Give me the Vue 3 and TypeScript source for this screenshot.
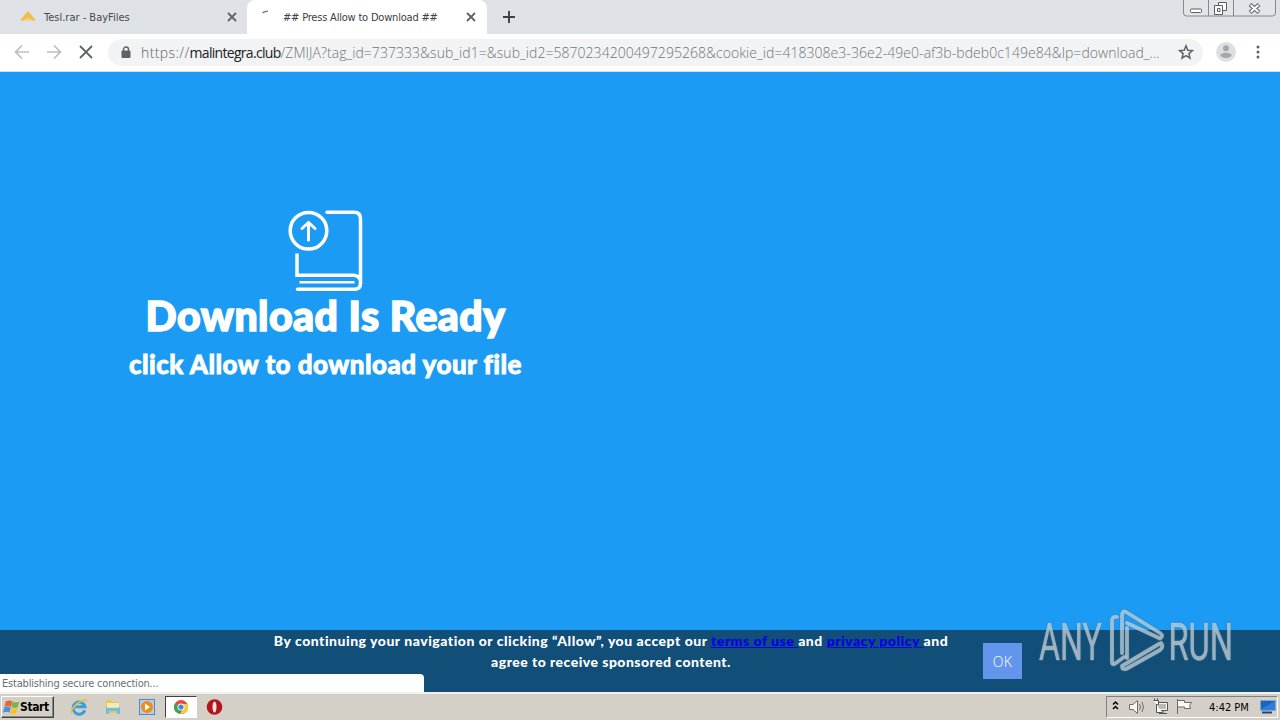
<script setup lang="ts">
interface Tab { title: string; active: boolean }
const tabs: Tab[] = [
  { title: 'Tesl.rar - BayFiles', active: false },
  { title: '## Press Allow to Download ##', active: true },
]
const path = '/ZMIJA?tag_id=737333&sub_id1=&sub_id2=5870234200497295268&cookie_id=418308e3-36e2-49e0-af3b-bdeb0c149e84&lp=download_...'
</script>

<template>
  <div class="screen">
    <header class="tabs">
      <div v-for="tab in tabs" :key="tab.title" class="tab" :class="{ active: tab.active }">
        <svg v-if="!tab.active" class="fav" viewBox="0 0 16 16"><path d="M0 11.5 8 2l8 9.5-3.3.3L8 8.6l-4.700 3.200z" fill="#f0bd45" /><path d="m3.500 11.500 4.500-3 4.500 3z" fill="#f6cf6c" /></svg>
        <svg v-else class="fav" viewBox="0 0 16 16"><path d="M5.500 4Q7.500 2 11 2.200" fill="none" stroke="#858585" stroke-width="1.600" /></svg>
        <span class="title">{{ tab.title }}</span>
        <svg class="close" viewBox="0 0 10 10"><path d="m1 1 8 8M9 1 1 9" stroke="#5f6368" stroke-width="1.800" /></svg>
      </div>
      <svg class="plus" viewBox="0 0 12 12"><path d="M6 0v12M0 6h12" stroke="#3c4043" stroke-width="1.900" /></svg>
      <svg class="window" viewBox="0 0 94 18">
        <path d="M.5 0v13q0 3 3 3h86q3 0 3-3V0M25.500 0v16M50.500 0v16" fill="#e2e4e8" stroke="#85888e" />
        <rect x="7.500" y="9" width="11" height="3.500" rx="1" fill="#fff" stroke="#5b5e66" />
        <path d="M35.500 2.500h8v8h-8z" fill="#fff" stroke="#5b5e66" />
        <path d="M31.500 5.500h8v9h-8zM34.500 8.500h2.500v3h-2.500z" fill="#fff" stroke="#5b5e66" />
        <path d="m67 4.500 9 8M76 4.500l-9 8" stroke="#5b5e66" stroke-width="4" /><path d="m67.500 5 8 7M75.500 5l-8 7" stroke="#fff" stroke-width="2" />
      </svg>
    </header>

    <div class="toolbar">
      <svg class="nav" viewBox="0 0 96 24">
        <g fill="none" stroke-width="1.700">
          <path d="M21 12H8M14 5.500 7.500 12l6.500 6.500M39 12h13M46 5.500l6.500 6.500-6.500 6.500" stroke="#bcbec1" />
          <path d="m72 6 12 12M84 6 72 18" stroke="#5f6368" stroke-width="1.800" />
        </g>
      </svg>
      <div class="address">
        <svg class="lock" viewBox="0 0 10 13"><path d="M2.500 5V3.500a2.500 2.500 0 0 1 5 0V5" fill="none" stroke="#5f6368" stroke-width="1.400" /><rect x=".5" y="4.500" width="9" height="7.500" rx="1" fill="#5f6368" /></svg>
        <div class="url"><span class="scheme">https://</span><span class="host">malintegra.club</span><span class="path">{{ path }}</span></div>
        <svg class="star" viewBox="0 0 16 16"><path d="m8 1.800 1.800 4.400 4.700.4-3.600 3 1.100 4.600L8 11.700l-4 2.500 1.100-4.600-3.600-3 4.700-.4z" fill="none" stroke="#5f6368" stroke-width="1.500" /></svg>
      </div>
      <svg class="avatar" viewBox="0 0 20 20"><circle cx="10" cy="10" r="10" fill="#dedfe1" /><circle cx="10" cy="6.200" r="3" fill="#a5a7aa" /><path d="M4.300 13.600c0-3.800 11.400-3.800 11.400 0-1.300 3.100-10.100 3.100-11.400 0z" fill="#a5a7aa" /></svg>
      <svg class="dots" viewBox="0 0 4 14"><g fill="#5f6368"><circle cx="2" cy="2" r="1.500" /><circle cx="2" cy="7" r="1.500" /><circle cx="2" cy="12" r="1.500" /></g></svg>
    </div>

    <main>
      <section class="hero">
        <svg class="book" viewBox="0 0 78 84">
          <g fill="none" stroke="#fff" stroke-width="3.500" stroke-linecap="round">
            <circle cx="21.500" cy="22.700" r="18.300" />
            <path d="M21.500 32V15M15 20.500 21.500 14.500l6.500 6" stroke-width="3" />
            <path d="M40 4.200h27q6.500 0 6.500 6.500v64.500q0 6-6 6H10.500" />
            <path d="M10 45.500V67.200H66.500q5 0 7 5" stroke-linecap="butt" />
            <path d="M12.500 74.200h55" stroke-width="2.600" stroke-linecap="butt" />
          </g>
        </svg>
        <h1>Download Is Ready</h1>
        <h2>click Allow to download your file</h2>
      </section>
      <footer class="consent">
        <p><span class="line one">By continuing your navigation or clicking “Allow”, you accept our <a>terms of use </a>and <a>privacy policy </a>and</span><span class="line two">agree to receive sponsored content.</span></p>
        <button>OK</button>
      </footer>
      <div class="status">Establishing secure connection...</div>
      <svg class="watermark" viewBox="0 0 230 66">
        <g fill="#dce9f0" fill-opacity=".6" stroke="#dce9f0" stroke-opacity=".3" stroke-width=".7" font-family="Roboto, sans-serif" font-weight="400" font-size="51">
          <text transform="translate(4 51) scale(.63 1)">ANY</text>
          <text transform="translate(133.500 51) scale(.64 1)">RUN</text>
        </g>
        <g fill="none" stroke="#dce9f0" stroke-opacity=".6" stroke-width="3.800" stroke-linejoin="round" stroke-linecap="round">
          <path d="M82 8q-5-1-5 4v41q0 4 4 1l8-6" />
          <path d="M87 44V7q0-6 4-4l34 21q4 3 0 5.500L92 14M92 19v30M126 34q3 4-1 7L91 60q-4 1-4-3L124 35" />
        </g>
      </svg>
    </main>

    <nav class="taskbar">
      <div class="start">
        <svg viewBox="0 0 18 16"><path d="M3 2q4-2 7 0L8.500 8q-3-2-7 0z" fill="#e8653a" /><path d="M10.500 2.200q3 2 7 0L15.500 8q-3 2-6.500 0z" fill="#75b843" /><path d="M1.300 8.500q3-2 7 0L6.800 14q-3-2-6.800 0z" fill="#4a91d9" /><path d="M9 8.800q3 2 6.500 0l-1.500 6q-3 2-6.500 0z" fill="#f5c22e" /></svg>
        <b>Start</b>
      </div>
      <div class="apps">
        <div class="app"><svg viewBox="0 0 18 18"><path d="M14.800 12.200A6 6 0 1 1 15 8.800H5" fill="none" stroke="#38a0dd" stroke-width="3" /><path d="M2 15.500C-1 14 5 6 12 2.500q5-2 4.500 1.500" fill="none" stroke="#efbe3f" stroke-width="1.500" /></svg></div>
        <div class="app"><svg viewBox="0 0 18 18"><path d="M2 2h5l1 2h7v11H2z" fill="#e9c65c" /><path d="M3 5h12v6H3z" fill="#faeba3" /><path d="M2 9h14v7h-3v-3H5v3H2z" fill="#76bddd" /><path d="M3 9.500h12" stroke="#c5e9f5" /></svg></div>
        <div class="app"><svg viewBox="0 0 18 18"><rect x="1.500" y="1.500" width="15" height="15" fill="#afd0ed" stroke="#4b8bca" /><circle cx="9" cy="9" r="6" fill="#f18a19" /><path d="m7 5.500 5 3.500-5 3.500z" fill="#fff" /></svg></div>
        <div class="app current"><svg viewBox="0 0 18 18"><circle cx="9" cy="9" r="7" fill="#e24a3b" /><path d="M9 9 3 5.400A7 7 0 0 0 8 15.900z" fill="#34a853" /><path d="M9 6h6.300A7 7 0 0 1 8 15.900L12 9z" fill="#f9ce33" /><circle cx="9" cy="9" r="3.500" fill="#fff" /><circle cx="9" cy="9" r="2.600" fill="#4285dd" /></svg></div>
        <div class="app"><svg viewBox="0 0 18 18"><circle cx="8.500" cy="9" r="7.800" fill="#b7131b" /><ellipse cx="8.500" cy="9" rx="2" ry="5.500" fill="#f3e4e1" /></svg></div>
      </div>
      <div class="tray">
        <svg class="trayicons" viewBox="0 0 86 20">
          <path d="m3 7.500 2.500-2.500 2.500 2.500M3 12 5.500 9.500 8 12" fill="none" stroke="#000" stroke-width="1.500" />
          <g fill="#f7f7f4" stroke="#6d6d6a"><path d="M19.500 7.500H23l4.500-4v13l-4.500-4h-3.500z" /><path d="M29.500 7q2 3 0 6M32 5q3 5 0 10" fill="none" /></g>
          <g fill="#f8f8f5" stroke="#555"><path d="M46.500 5.500h11v8h-11zM49 16.500h8M53 14v2" /><path d="M48 7h8v5h-8z" fill="#b9b9b5" stroke="none" /><path d="M43.500 3.500h5v4h-2v8h6M44.500 3V1.500M47.500 3V1.500" /></g>
          <path d="M67.500 2v15M67.500 3.500h7v2h7l-2 3 1 3h-6v-1.500h-7" fill="#fafafa" stroke="#6b6b68" />
        </svg>
        <span class="clock">4:42 PM</span>
        <svg class="desktop" viewBox="0 0 16 14"><path d="M.5.500h15v10H.5z" fill="#1d62bc" stroke="#7aa6d8" /><path d="M1 9 15 1v9H1z" fill="#2e7dd6" /><path d="M2 12.500h10" stroke="#27456e" stroke-width="2" /></svg>
      </div>
    </nav>
  </div>
</template>

<style>
body { margin: 0; }
</style>

<style scoped>
.screen { width: 1280px; height: 720px; display: flex; flex-direction: column; overflow: hidden; font-family: "DejaVu Sans Condensed", "DejaVu Sans", sans-serif; font-size: 11px; }
svg { display: block; flex: none; }
.tabs { height: 34px; background: #dee1e6; display: flex; align-items: flex-start; box-sizing: border-box; flex: none; }
.tab { height: 34px; display: flex; align-items: center; box-sizing: border-box; width: 247px; padding: 0 10px 0 20px; color: #45494d; }
.tab.active { width: 240px; background: #fff; border-radius: 8px 8px 0 0; padding: 0 11px 0 10px; color: #3c4043; }
.fav { width: 16px; height: 16px; }
.title { flex: 1; margin-left: 8px; white-space: nowrap; letter-spacing: 0; }
.active .title { margin-left: 10px; letter-spacing: -.2px; }
.active .fav { align-self: flex-start; margin-top: 9px; }
.close { width: 10px; height: 10px; }
.plus { width: 12px; height: 12px; margin: 11px 0 0 16px; }
.window { width: 94px; height: 18px; margin-left: auto; margin-right: 3px; }
.toolbar { height: 38px; background: #fff; border-bottom: 1px solid #d8dcdf; box-sizing: border-box; display: flex; align-items: center; flex: none; padding-bottom: 1px; }
.nav { width: 96px; height: 24px; margin-left: 8px; }
.address { margin-left: 4px; width: 1095px; height: 27px; box-sizing: border-box; border-radius: 14px; background: #f1f3f4; display: flex; align-items: center; padding: 0 9px 0 13px; }
.lock { width: 10px; height: 13px; }
.url { font: 300 14px/19px "Open Sans", sans-serif; margin-left: 10px; flex: 1; white-space: nowrap; color: #70757a; }
.scheme { color: #5f6368; letter-spacing: .4px; }
.host { color: #202124; font-weight: 400; letter-spacing: -.7px; }
.path { letter-spacing: .04px; }
.star { width: 16px; height: 16px; }
.avatar { width: 20px; height: 20px; margin-left: 13px; }
.dots { width: 4px; height: 14px; margin-left: 20px; }
main { height: 620px; flex: none; background: #1c9bf4; position: relative; display: flex; flex-direction: column; justify-content: space-between; }
.hero { width: 651px; padding-top: 136px; display: flex; flex-direction: column; align-items: center; color: #fff; }
.book { width: 78px; height: 84px; }
h1, h2 { margin: 0; font-family: Lato, sans-serif; font-weight: 900; white-space: nowrap; paint-order: stroke; stroke-linejoin: round; font-variant-ligatures: none; }
h1 { font-size: 41px; line-height: 48px; letter-spacing: .45px; -webkit-text-stroke: 1.500px #fff; }
h2 { font-size: 26px; line-height: 32px; margin-top: 8px; letter-spacing: .46px; -webkit-text-stroke: .8px #fff; }
.consent { height: 62px; background: #114e78; display: flex; box-sizing: border-box; padding-left: 262px; }
p { margin: 0; width: 698px; color: #fff; font: 900 14px/21px Lato, sans-serif; text-align: center; font-variant-ligatures: none; }
.line { display: block; white-space: nowrap; letter-spacing: .47px; }
.one { letter-spacing: .52px; }
a { color: #0000ee; text-decoration: underline; }
button { width: 39px; height: 36px; margin: 13px 0 0 23px; padding: 0; border: 0; background: #6495ed; color: #fff; font: 300 14px "Open Sans", sans-serif; letter-spacing: .3px; }
.status { position: absolute; left: 0; bottom: 0; width: 424px; height: 18px; box-sizing: border-box; padding-left: 2px; background: #fff; border-radius: 0 4px 0 0; line-height: 20px; letter-spacing: -.2px; color: #6a6e72; }
.watermark { position: absolute; left: 1035px; top: 537px; width: 230px; height: 66px; filter: drop-shadow(0 0 1px #536f80); }
.taskbar { height: 28px; background: #d4d0c8; border-top: 2px solid #f3f1ed; box-sizing: border-box; display: flex; align-items: center; flex: none; }
.start { width: 53px; height: 22px; margin-left: 1px; box-sizing: border-box; display: flex; align-items: center; border: 1px solid; border-color: #fff #404040 #404040 #fff; box-shadow: inset -1px -1px #888; color: #000; padding-left: 1px; }
.start svg { width: 17px; height: 16px; }
.start b { font-size: 12px; letter-spacing: -.4px; }
.apps { display: flex; margin-left: 9px; gap: 2px; }
.app { width: 32px; height: 22px; box-sizing: border-box; display: flex; align-items: center; justify-content: center; }
.app svg { width: 18px; height: 18px; }
.current { background: #fff; border: 1px solid; border-color: #404040 #fff #fff #404040; }
.tray { width: 172px; height: 22px; margin-left: auto; margin-right: 2px; box-sizing: border-box; border: 1px solid; border-color: #808080 #fff #fff #808080; display: flex; align-items: center; color: #000; }
.trayicons { width: 86px; height: 20px; margin-left: 3px; }
.clock { margin-left: 13px; width: 51px; white-space: nowrap; }
.desktop { width: 16px; height: 14px; }
</style>
